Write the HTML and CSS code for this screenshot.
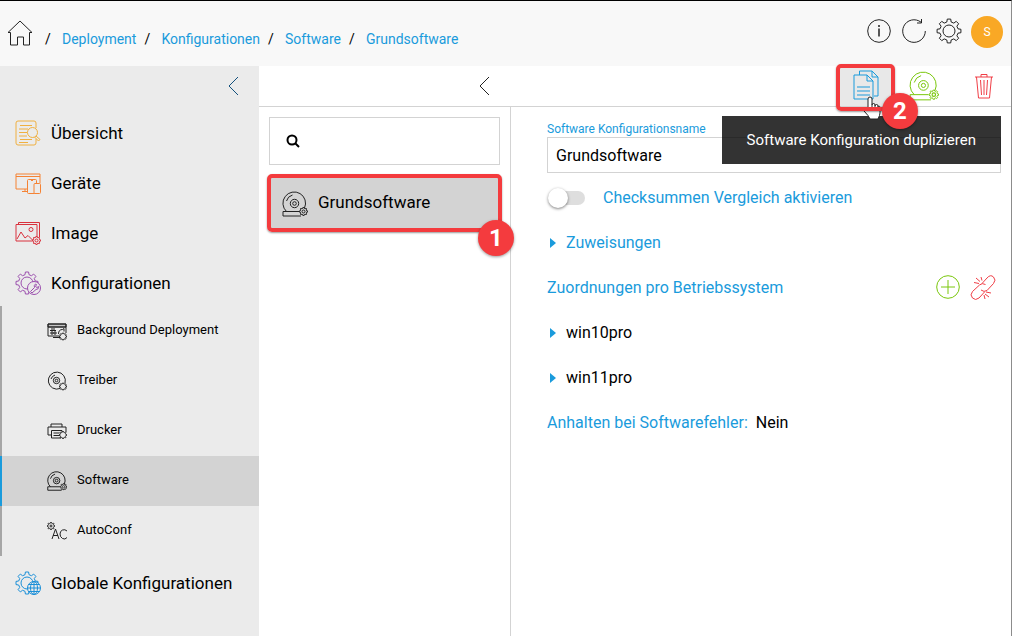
FILE: index.html
```html
<!DOCTYPE html>
<html lang="de">
<head>
    <meta charset="UTF-8">
    <meta name="viewport" content="width=device-width, initial-scale=1.0">
    <title>Grundsoftware - Software</title>
    <link rel="stylesheet" href="styles.css">
</head>
<body>
    <!-- shared icon shapes -->
    <svg class="sprite" aria-hidden="true">
        <symbol id="gear" viewBox="-12 -12 24 24">
            <path vector-effect="non-scaling-stroke" d="M-2-8.3L-1.6-11L1.6-11L2-8.3L4.45-7.28L6.65-8.91L8.91-6.65L7.28-4.45L8.3-2L11-1.6L11 1.6L8.3 2L7.28 4.45L8.91 6.65L6.65 8.91L4.45 7.28L2 8.3L1.6 11L-1.6 11L-2 8.3L-4.45 7.28L-6.65 8.91L-8.91 6.65L-7.28 4.45L-8.3 2L-11 1.6L-11-1.6L-8.3-2L-7.28-4.45L-8.91-6.65L-6.65-8.91L-4.45-7.28Z"/>
        </symbol>
        <symbol id="software" viewBox="0 0 26 26">
            <path vector-effect="non-scaling-stroke" d="M4.500 20.500A11.300 11.300 0 1 1 22.500 17M1 20.500H17M1 20.500V25H19"/>
            <circle vector-effect="non-scaling-stroke" cx="12.500" cy="12.500" r="4.200"/>
            <circle vector-effect="non-scaling-stroke" cx="12.500" cy="12.500" r="1.800"/>
            <path vector-effect="non-scaling-stroke" d="M4.500 10A8.500 8.500 0 0 1 10.500 4"/>
            <use href="#gear" x="17" y="16" width="9" height="9"/>
            <circle cx="21.500" cy="20.500" r="1.500"/>
        </symbol>
    </svg>

    <header class="header">
        <nav class="breadcrumb">
            <a href="#" class="home" aria-label="Start">
                <svg class="icon" viewBox="0 0 26 26"><path d="M1 12.500L13 1l12 11.500h-2.500V25h-6v-8h-6v8h-7V12.500z"/></svg>
            </a>
            <span>/</span><a href="#">Deployment</a>
            <span>/</span><a href="#">Konfigurationen</a>
            <span>/</span><a href="#">Software</a>
            <span>/</span><a href="#">Grundsoftware</a>
        </nav>
        <div class="header-actions">
            <button type="button" aria-label="Info">
                <svg class="icon" viewBox="0 0 26 26"><circle cx="13" cy="13" r="11.300"/><path d="M13 10.500v8M13 7v2" stroke-width="1.500"/></svg>
            </button>
            <button type="button" aria-label="Aktualisieren">
                <svg class="icon" viewBox="0 0 26 26"><path d="M24.300 13A11.300 11.300 0 1 1 20 4.200M20.500 1v4h-4.500"/></svg>
            </button>
            <button type="button" aria-label="Einstellungen">
                <svg class="icon" viewBox="0 0 26 26"><use href="#gear" width="26" height="26"/><circle cx="13" cy="13" r="6"/></svg>
            </button>
            <button type="button" class="avatar">S</button>
        </div>
    </header>

    <div class="page">
        <aside class="sidebar">
            <div class="sidebar-top">
                <button type="button" aria-label="Menü einklappen">
                    <svg class="chevron" viewBox="0 0 12 20"><path d="M11 1L2 10l9 9"/></svg>
                </button>
            </div>
            <nav>
                <a href="#" class="nav-item">
                    <svg class="icon yellow" viewBox="0 0 26 26"><path d="M21 8V3q0-2-2-2H3Q1 1 1 3v20q0 2 2 2h16q2 0 2-2v-4M5 5.500h12M4 9h9M4 12.500h8M4 16h8M5 19.500h12M4 22.500h9"/><circle cx="17.500" cy="12.500" r="5"/><path d="M21 16l4 3.500-1.500 1.500-4-4"/></svg>
                    Übersicht
                </a>
                <a href="#" class="nav-item">
                    <svg class="icon orange" viewBox="0 0 26 26"><path d="M12 19H1V4h24v9M1 6.500h24M10 19v2M7 21.500h6"/><rect x="12.500" y="9.500" width="9" height="14" rx="1"/><path d="M16 10.500h2"/><rect class="fill" x="19" y="13.500" width="6.500" height="10" rx="1"/></svg>
                    Geräte
                </a>
                <a href="#" class="nav-item">
                    <svg class="icon red" viewBox="0 0 26 26"><path d="M17 21H1V4.500h21V17M3.500 4.500V2.500h21V17M2 19l4-7 4 6 3-2.500 5 5"/><circle cx="16" cy="9.500" r="2"/><use href="#gear" x="17" y="16" width="9" height="9"/><circle cx="21.500" cy="20.500" r="1.500"/></svg>
                    Image
                </a>
                <a href="#" class="nav-item">
                    <svg class="icon purple" viewBox="0 0 26 26"><use href="#gear" x="0" y="1" width="24" height="24"/><circle cx="12" cy="13" r="6"/><circle class="fill" cx="19" cy="18" r="6.500"/><path d="M15.500 21.500l4-4q-1-2 1-3.500l1 .5-1 2 1.500 1 1.500-1q.5 3-2.500 3l-4 3.500z"/></svg>
                    Konfigurationen
                </a>
                <div class="sub-nav">
                    <a href="#">
                        <svg class="icon" viewBox="0 0 20 20"><path class="shade" d="M1 3h18v3H1z"/><path d="M12 15H1V3h18v9M1 6h18M3 9.500h6M4 8h4M4 11h2v2H4zM7 11h2v2H7zM11.500 13q0-4.500 4-4.500l1.500-1v3M6 16.500h7"/><use href="#gear" x="12" y="11.500" width="8" height="8"/></svg>
                        <span>Background Deployment</span>
                    </a>
                    <a href="#">
                        <svg class="icon" viewBox="0 0 20 20"><path d="M13 17.500A8.500 8.500 0 1 1 18 12M4 8q1-3 4-4"/><circle cx="9.500" cy="9.500" r="3.200"/><circle cx="9.500" cy="9.500" r="1.300"/><use href="#gear" x="12" y="11.500" width="8" height="8"/></svg>
                        <span>Treiber</span>
                    </a>
                    <a href="#">
                        <svg class="icon" viewBox="0 0 20 20"><path d="M4 14H1V6h18v5M4 6V3h11v3M4.500 17V9.500H15V11M4.500 17H14M6.500 12h6M6.500 14.500h6"/><use href="#gear" x="12" y="10" width="8" height="8"/></svg>
                        <span>Drucker</span>
                    </a>
                    <a href="#" class="active">
                        <svg class="icon" viewBox="0 0 20 20"><use href="#software" width="20" height="20"/></svg>
                        <span>Software</span>
                    </a>
                    <a href="#">
                        <svg class="icon" viewBox="0 0 20 20"><use href="#gear" x="0" y="1" width="8" height="8"/><circle cx="4" cy="5" r="1"/><path d="M5 18L8.500 8 12 18M6 14.500h5M20 10q-2-2-4.500-1T13 13t2.500 4.500T20 16.500"/></svg>
                        <span>AutoConf</span>
                    </a>
                </div>
                <a href="#" class="nav-item">
                    <svg class="icon blue" viewBox="0 0 26 26"><use href="#gear" x="0" y="1" width="24" height="24"/><circle cx="12" cy="13" r="6"/><circle class="fill" cx="19" cy="18" r="6.500"/><path d="M12.500 18h13M19 11.500v13M13.500 14.500h11M13.500 21.500h11"/><ellipse cx="19" cy="18" rx="3.500" ry="6.500"/></svg>
                    Globale Konfigurationen
                </a>
            </nav>
        </aside>

        <section class="list">
            <div class="toolbar">
                <button type="button" aria-label="Liste einklappen">
                    <svg class="chevron" viewBox="0 0 12 20"><path d="M11 1L2 10l9 9"/></svg>
                </button>
            </div>
            <div class="list-body">
                <div class="search">
                    <svg viewBox="0 0 14 14"><circle cx="6" cy="6" r="4.500"/><path d="M9.500 9.500L13 13"/></svg>
                    <input type="search" aria-label="Suche">
                </div>
                <button type="button" class="list-item marked">
                    <svg class="icon" viewBox="0 0 26 26"><use href="#software" width="26" height="26"/></svg>
                    Grundsoftware
                    <span class="badge">1</span>
                </button>
            </div>
        </section>

        <main class="detail">
            <div class="toolbar">
                <button type="button" class="copy marked" aria-label="Software Konfiguration duplizieren">
                    <svg class="copy-icon" viewBox="0 0 26 32"><path d="M6.500 5V1H19l6 6v19h-4M19 1v6h6"/><path d="M1 5h13l6 6v18H1zM14 5v6h6M4 17h13M4 21h13M4 25h13"/></svg>
                    <svg class="cursor" viewBox="0 0 18 24"><path d="M5 14V3q0-2 2-2t2 2v6q0-1.500 1.500-1.500T12 9v1q0-1.500 1.500-1.500T15 10v1q0-1 1-1t1 2v5q0 2-2 6H7q-1-3-6-8 0-2 2-1.500zM9 9v4M12 10v3M15 11v3"/></svg>
                    <span class="badge">2</span>
                </button>
                <button type="button" class="package" aria-label="Software">
                    <svg class="icon green" viewBox="0 0 26 26"><use href="#software" width="26" height="26"/></svg>
                </button>
                <button type="button" aria-label="Löschen">
                    <svg class="icon trash" viewBox="0 0 26 26"><path d="M4 4h18M10 4V1.500h6V4M5.500 4l2 21h11l2-21M9.500 7l1 15M13 7v15M16.500 7l-1 15"/></svg>
                </button>
                <div class="tooltip" role="tooltip">Software Konfiguration duplizieren</div>
            </div>
            <form class="detail-body">
                <label class="field-label" for="configName">Software Konfigurationsname</label>
                <input type="text" id="configName" value="Grundsoftware">

                <div class="row">
                    <input type="checkbox" id="checksum" class="switch">
                    <label for="checksum">Checksummen Vergleich aktivieren</label>
                </div>
                <details>
                    <summary class="row">Zuweisungen</summary>
                </details>
                <div class="row">
                    <span class="name">Zuordnungen pro Betriebssystem</span>
                    <button type="button" aria-label="Hinzufügen">
                        <svg class="icon green" viewBox="0 0 26 26"><circle cx="13" cy="13" r="11.300"/><path d="M13 6v14M6 13h14"/></svg>
                    </button>
                    <button type="button" aria-label="Zuordnung lösen">
                        <svg class="icon trash" viewBox="0 0 26 26"><path d="M12 9.500l5-5.500q3.500-4 6.500-1t0 6.500l-6.500 7q-3 2-6-.5M15.500 10.500q-3.500-2-6 .5l-7 6.500q-3 3.500 0 6.500t6.500 0l5.500-6M9 9.500L4 8.500M10 7.500L6 4M12 6.500l-1-3.500M16 18l5 1M15 20l4 3M14 21l1 4"/></svg>
                    </button>
                </div>
                <details>
                    <summary class="row dark">win10pro</summary>
                </details>
                <details>
                    <summary class="row dark">win11pro</summary>
                </details>
                <div class="row">
                    <span>Anhalten bei Softwarefehler:</span>
                    <span class="value">Nein</span>
                </div>
            </form>
        </main>
    </div>
</body>
</html>
```
FILE: styles.css
```css
* {
    box-sizing: border-box;
}

body {
    margin: 0;
    min-height: 100vh;
    display: flex;
    flex-direction: column;
    border-top: 1px solid #000;
    border-right: 1px solid #8c8c8c;
    background: #fff;
    color: #000;
    font-family: Roboto, "Liberation Sans", sans-serif;
    font-size: 16px;
}

a {
    color: #1a9bdc;
    text-decoration: none;
}

button {
    padding: 0;
    border: 0;
    background: none;
    color: inherit;
    font: inherit;
    cursor: pointer;
    display: flex;
    align-items: center;
    justify-content: center;
}

svg {
    display: block;
    flex: none;
    fill: none;
    stroke: #222;
    stroke-linejoin: round;
}

.sprite {
    position: absolute;
    width: 0;
    height: 0;
}

.icon {
    width: 26px;
    height: 26px;
}

.yellow { stroke: #f0b040; }
.orange { stroke: #f58233; }
.red { stroke: #d9303c; }
.purple { stroke: #9b4fae; }
.blue { stroke: #1a8fd8; }
.green { stroke: #7ac70c; }
.trash { stroke: #f03e46; }
.fill { fill: #ebebeb; }
.shade { fill: #c4c4c4; }

/* header */
.header {
    height: 65px;
    padding: 0 8px 0 7px;
    display: flex;
    justify-content: space-between;
    align-items: center;
    background: #f8f8f8;
}

.breadcrumb {
    display: flex;
    align-items: center;
    font-size: 14px;
    padding-top: 10px;
}

.breadcrumb span {
    width: 25px;
    padding-left: 8px;
}

.breadcrumb .home {
    margin: -12px 4px 0 0;
}

.header-actions {
    display: flex;
    align-items: center;
    gap: 9px;
    padding-bottom: 4px;
}

.header-actions .icon {
    margin-bottom: 2px;
}

.avatar {
    width: 32px;
    height: 32px;
    border-radius: 50%;
    background: #f9a825;
    color: #fff;
    font-size: 12px;
}

.page {
    flex: 1;
    display: flex;
}

/* sidebar */
.sidebar {
    width: 259px;
    flex: none;
    background: #ebebeb;
}

.sidebar-top {
    height: 40px;
    padding-right: 20px;
    display: flex;
    align-items: center;
    justify-content: flex-end;
}

.chevron {
    width: 12px;
    height: 20px;
}

.sidebar .chevron {
    stroke: #12507c;
}

.nav-item {
    height: 50px;
    padding: 4px 0 0 15px;
    display: flex;
    align-items: center;
    gap: 10px;
    color: #000;
    font-size: 17px;
}

.sub-nav {
    border-left: 2px solid #a6a6a6;
}

.sub-nav a {
    height: 50px;
    padding-left: 45px;
    display: flex;
    align-items: center;
    gap: 10px;
    color: #000;
    font-size: 13px;
}

.sub-nav a.active {
    margin-left: -2px;
    border-left: 2px solid #1a9bdc;
    background: #d3d3d3;
}

.sub-nav span {
    padding-bottom: 4px;
}

.sub-nav .icon {
    width: 20px;
    height: 20px;
}

/* list of configurations */
.list {
    width: 252px;
    flex: none;
    display: flex;
    flex-direction: column;
}

.toolbar {
    height: 41px;
    flex: none;
    display: flex;
    align-items: center;
    justify-content: flex-end;
    border-bottom: 1px solid #d3d3d3;
    position: relative;
}

.list .toolbar {
    padding-right: 21px;
}

.list-body {
    flex: 1;
    padding: 10px;
    border-right: 1px solid #d3d3d3;
}

.search {
    height: 48px;
    padding: 0 16px;
    display: flex;
    align-items: center;
    gap: 8px;
    border: 1px solid #d3d3d3;
}

.search svg {
    width: 14px;
    height: 14px;
    stroke: #000;
    stroke-width: 2;
}

.search input {
    min-width: 0;
    flex: 1;
    border: 0;
    outline: 0;
    font: inherit;
}

.list-item {
    width: 100%;
    height: 54px;
    margin-top: 11px;
    padding: 0 0 2px 13px;
    justify-content: flex-start;
    gap: 10px;
    background: #d3d3d3;
    font-size: 17px;
}

.list-item .icon {
    margin-top: 4px;
}

/* numbered markers */
.marked {
    position: relative;
}

.marked::after {
    content: "";
    position: absolute;
    inset: -2px;
    border: 4px solid #f43b3e;
    border-radius: 5px;
    box-shadow: 0 1px 2px rgba(0, 0, 0, 0.4);
}

.badge {
    position: absolute;
    z-index: 3;
    right: -14px;
    bottom: -26px;
    width: 36px;
    height: 36px;
    border-radius: 50%;
    background: #f43b3e;
    box-shadow: 0 1px 3px rgba(0, 0, 0, 0.4);
    color: #fff;
    font-size: 24px;
    font-weight: 700;
    line-height: 36px;
    text-align: center;
}

/* detail */
.detail {
    flex: 1;
    min-width: 0;
}

.detail .toolbar {
    padding-right: 14px;
}

.copy {
    width: 55px;
    height: 40px;
    background: #e8e8e8;
    z-index: 2;
}

.copy.marked::after {
    bottom: -5px;
    z-index: 2;
}

.copy .badge {
    right: -25px;
    bottom: -23px;
}

.copy-icon {
    width: 26px;
    height: 32px;
    stroke: #1a9bdc;
}

.cursor {
    position: absolute;
    left: 25px;
    top: 30px;
    width: 18px;
    height: 24px;
    fill: #fff;
}

.package {
    margin: 0 32px 0 16px;
}

.package .icon {
    width: 30px;
    height: 30px;
}

.tooltip {
    position: absolute;
    z-index: 1;
    top: 50px;
    right: 10px;
    padding: 0 25px;
    background: rgba(0, 0, 0, 0.8);
    color: #fff;
    font-size: 15px;
    line-height: 48px;
}

.detail-body {
    padding: 14px 10px 0 36px;
    color: #1a9bdc;
}

.field-label {
    display: block;
    font-size: 12px;
    line-height: 16px;
}

.detail-body input[type="text"] {
    display: block;
    width: 100%;
    height: 36px;
    margin-bottom: 2px;
    padding: 0 8px;
    border: 1px solid #d3d3d3;
    font: inherit;
}

.row {
    height: 45px;
    display: flex;
    align-items: center;
}

.row .name {
    flex: 1;
}

.row button {
    margin: 0 0 2px 9px;
}

.row .trash {
    margin-right: 5px;
}

.value {
    margin-left: 8px;
    color: #000;
}

.dark {
    color: #000;
}

summary {
    list-style: none;
    cursor: pointer;
}

summary::before {
    content: "";
    margin: 0 10px 0 3px;
    border-left: 6px solid #1a9bdc;
    border-top: 5px solid transparent;
    border-bottom: 5px solid transparent;
}

.switch {
    appearance: none;
    position: relative;
    width: 34px;
    height: 14px;
    margin: 0 18px 0 4px;
    border-radius: 7px;
    background: #dedede;
}

.switch::before {
    content: "";
    position: absolute;
    left: -3px;
    top: -3px;
    width: 20px;
    height: 20px;
    border-radius: 50%;
    background: #fff;
    box-shadow: 0 1px 3px rgba(0, 0, 0, 0.5);
}

.switch:checked::before {
    left: 17px;
}
```
